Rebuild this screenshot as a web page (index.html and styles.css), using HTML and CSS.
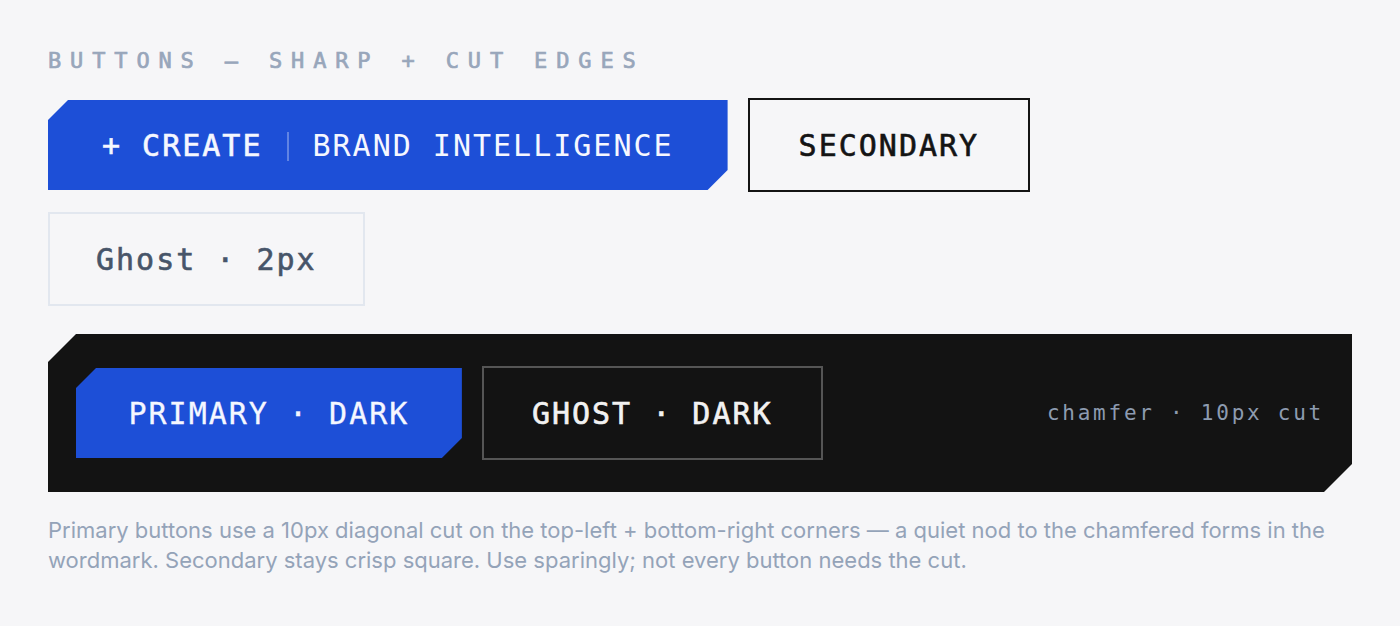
FILE: index.html
```html
<!DOCTYPE html>
<html lang="en">
<head>
<meta charset="utf-8">
<title>Buttons — Sharp + Cut Edges</title>
<link rel="stylesheet" href="styles.css">
</head>
<body>
<main class="page">
  <h2 class="section-title">BUTTONS — SHARP + CUT EDGES</h2>

  <div class="btn-row">
    <button class="btn btn-primary cut"><span class="strong">+ CREATE</span><span class="divider"></span><span class="light">BRAND INTELLIGENCE</span></button>
    <button class="btn btn-secondary">SECONDARY</button>
    <button class="btn btn-ghost">Ghost · 2px</button>
  </div>

  <div class="dark-panel">
    <button class="btn btn-primary cut btn-medium">PRIMARY · DARK</button>
    <button class="btn btn-ghost-dark">GHOST · DARK</button>
    <span class="panel-note">chamfer · 10px cut</span>
  </div>

  <p class="caption">Primary buttons use a 10px diagonal cut on the top-left + bottom-right corners — a quiet nod to the chamfered forms in the wordmark. Secondary stays crisp square. Use sparingly; not every button needs the cut.</p>
</main>
</body>
</html>
```

FILE: styles.css
```css
* {
  box-sizing: border-box;
}

html, body {
  margin: 0;
  padding: 0;
  background: #f6f6f8;
}

.page {
  padding: 48px;
  min-height: 626px;
}

.section-title {
  margin: 2px 0 26px 0;
  font-family: "DejaVu Sans Mono", "Liberation Mono", monospace;
  font-size: 22px;
  line-height: 22px;
  font-weight: 400;
  -webkit-text-stroke: 0.7px currentColor;
  letter-spacing: 8.85px;
  color: #98a6bb;
}

.btn-row {
  display: flex;
  flex-wrap: wrap;
  align-items: center;
  gap: 20px;
}

.btn {
  display: inline-flex;
  align-items: center;
  margin: 0;
  font-family: "DejaVu Sans Mono", "Liberation Mono", monospace;
  font-size: 30px;
  line-height: 30px;
  font-weight: 400;
  -webkit-text-stroke: 0.6px currentColor;
  letter-spacing: 2px;
  white-space: nowrap;
  cursor: pointer;
  background: none;
  border: none;
  border-radius: 0;
}

.cut {
  clip-path: polygon(20px 0, 100% 0, 100% calc(100% - 20px), calc(100% - 20px) 100%, 0 100%, 0 20px);
}

.btn-primary {
  background: #1d4fd7;
  color: #f5f7ff;
  padding: 31px 54px 29px 54px;
}

.btn-primary .light {
  -webkit-text-stroke: 0;
}

.btn-primary .divider {
  display: inline-block;
  width: 2px;
  height: 29px;
  margin: 0 24px 0 24px;
  background: rgba(255, 255, 255, 0.3);
}

.btn-medium {
  -webkit-text-stroke: 0.3px currentColor;
  padding-left: 52.5px;
  padding-right: 52.5px;
}

.btn-secondary {
  border: 2px solid #141414;
  color: #141414;
  padding: 31px 49px 29px 49px;
}

.btn-ghost {
  border: 2px solid #e2e7ef;
  color: #475569;
  padding: 31px 46px 29px 46px;
}

.dark-panel {
  margin-top: 28px;
  display: flex;
  align-items: center;
  gap: 20px;
  padding: 32px 28px;
  background: #131313;
  clip-path: polygon(28px 0, 100% 0, 100% calc(100% - 28px), calc(100% - 28px) 100%, 0 100%, 0 28px);
}

.btn-ghost-dark {
  border: 2px solid #555555;
  color: #f2f2f2;
  padding: 31px 48px 29px 48px;
}

.panel-note {
  margin-left: auto;
  font-family: "DejaVu Sans Mono", "Liberation Mono", monospace;
  font-size: 21px;
  line-height: 30px;
  letter-spacing: 2.75px;
  color: #8d9bb0;
}

.caption {
  margin: 23px 0 0 0;
  font-family: Inter, "Noto Sans", sans-serif;
  font-size: 22px;
  line-height: 30px;
  color: #94a3b8;
}
```
